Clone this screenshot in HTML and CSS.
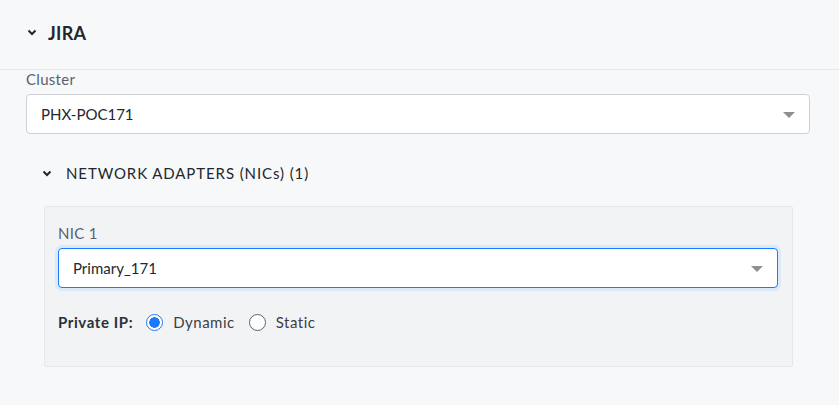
FILE: index.html
```html
<!DOCTYPE html>
<html>
<head>
<meta charset="utf-8">
<link rel="stylesheet" href="styles.css">
</head>
<body>
<div class="section-head">
  <svg class="chev" width="10" height="7" viewBox="0 0 10 7"><path d="M1.5 1.5 L5 5 L8.5 1.5" fill="none" stroke="#22272e" stroke-width="2"/></svg>
  <span class="title">JIRA</span>
</div>
<div class="content">
  <label class="field-label">Cluster</label>
  <div class="select">
    <span>PHX-POC171</span>
    <span class="caret"></span>
  </div>
  <div class="sub">
    <div class="sub-head">
      <svg class="chev" width="10" height="7" viewBox="0 0 10 7"><path d="M1.5 1.5 L5 5 L8.5 1.5" fill="none" stroke="#22272e" stroke-width="2"/></svg>
      <span class="sub-title">NETWORK ADAPTERS (NICs) (1)</span>
    </div>
    <div class="panel">
      <label class="field-label">NIC 1</label>
      <div class="select focused">
        <span>Primary_171</span>
        <span class="caret"></span>
      </div>
      <div class="radio-row">
        <span class="radio-label">Private IP:</span>
        <span class="radio checked"></span><span class="opt">Dynamic</span>
        <span class="radio"></span><span class="opt">Static</span>
      </div>
    </div>
  </div>
</div>
</body>
</html>
```
FILE: styles.css
```css
* { box-sizing: border-box; }
body {
  margin: 0;
  background: #f7f8fa;
  font-family: Lato, "Open Sans", sans-serif;
  color: #22272e;
  width: 839px;
  height: 405px;
  overflow: hidden;
}
.section-head {
  height: 70px;
  border-bottom: 1px solid #e5e7ea;
  display: flex;
  align-items: center;
  padding: 0 0 4px 27px;
}
.chev { display: block; }
.title {
  margin-left: 11px;
  font-size: 18px;
  font-weight: 700;
  letter-spacing: 0.3px;
}
.content {
  padding: 0 29px 0 26px;
}
.field-label {
  display: block;
  font-size: 15px;
  line-height: 18px;
  letter-spacing: 0.3px;
  color: #5a6170;
  margin-bottom: 6px;
}
.select {
  height: 40px;
  background: #fff;
  border: 1px solid #cfd1d4;
  border-radius: 4px;
  display: flex;
  align-items: center;
  justify-content: space-between;
  padding: 0 14px 0 14px;
  font-size: 15px;
  color: #22272e;
}
.select.focused {
  border-color: #1b7bff;
  box-shadow: 0 0 0 3px #dbe9f8;
}
.caret {
  width: 0;
  height: 0;
  border-left: 6px solid transparent;
  border-right: 6px solid transparent;
  border-top: 6px solid #8c8f94;
  margin-top: 1px;
}
.sub { padding: 0 17px 0 16px; }
.sub-head {
  display: flex;
  align-items: center;
  height: 72px;
  padding-top: 6px;
}
.sub-title {
  margin-left: 14px;
  font-size: 15px;
  letter-spacing: 0.9px;
  color: #22272e;
}
.panel {
  margin-left: 2px;
  background: #f2f3f5;
  border: 1px solid #e6e8eb;
  border-radius: 2px;
  height: 161px;
  padding: 17px 14px 0 13px;
}
.panel .field-label { margin-bottom: 6px; }
.radio-row {
  display: flex;
  align-items: center;
  margin-top: 25px;
  font-size: 15px;
  letter-spacing: 0.5px;
}
.radio-label { font-weight: 700; margin-right: 13px; color: #2b3038; letter-spacing: 0.6px; }
.radio {
  width: 17px;
  height: 17px;
  border-radius: 50%;
  border: 1.5px solid #5f6368;
  background: #fff;
  margin-right: 10px;
}
.radio.checked {
  border: 1.5px solid #1b7bff;
  background: radial-gradient(circle, #1b7bff 0 5px, #fff 5.5px);
}
.opt { margin-right: 14px; color: #3a3f47; }
```
